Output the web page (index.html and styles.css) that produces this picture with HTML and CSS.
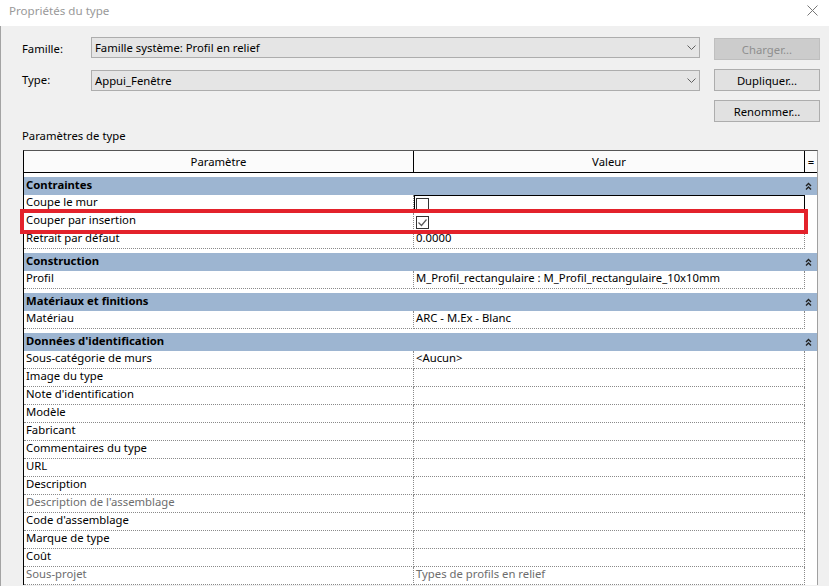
FILE: index.html
```html
<!DOCTYPE html>
<html lang="fr">
<head>
    <meta charset="UTF-8">
    <title>Propriétés du type</title>
    <link rel="stylesheet" href="styles.css">
</head>
<body>
    <div class="titlebar">
        <span class="title">Propriétés du type</span>
        <svg class="close" width="11" height="11" viewBox="0 0 11 11"><path d="M0.5 0.5 L10.5 10.5 M10.5 0.5 L0.5 10.5" stroke="#777" stroke-width="1" fill="none"/></svg>
    </div>

    <div class="content">
        <div class="top">
            <label class="lbl">Famille:</label>
            <div class="combo">
                <span>Famille système: Profil en relief</span>
                <svg width="9" height="5" viewBox="0 0 9 5"><path d="M0.5 0.5 L4.5 4.5 L8.5 0.5" stroke="#606060" fill="none"/></svg>
            </div>
            <button class="btn" disabled>Charger...</button>

            <label class="lbl">Type:</label>
            <div class="combo combo-low">
                <span>Appui_Fenêtre</span>
                <svg width="9" height="5" viewBox="0 0 9 5"><path d="M0.5 0.5 L4.5 4.5 L8.5 0.5" stroke="#606060" fill="none"/></svg>
            </div>
            <button class="btn">Dupliquer...</button>

            <span></span>
            <span></span>
            <button class="btn">Renommer...</button>
        </div>

        <div class="section-label">Paramètres de type</div>

        <div class="grid">
            <div class="head">
                <div class="h-name">Paramètre</div>
                <div class="h-val">Valeur</div>
                <div class="h-eq">=</div>
            </div>

            <div class="cat"><span>Contraintes</span><svg width="7" height="8" viewBox="0 0 7 8"><path d="M1 4 L3.5 1.5 L6 4 M1 7.5 L3.5 5 L6 7.5" stroke="#222" stroke-width="1.4" fill="none"/></svg></div>
            <div class="row"><div class="name">Coupe le mur</div><div class="val active"><span class="check"></span></div><div class="eq"></div></div>
            <div class="row"><div class="name">Couper par insertion</div><div class="val"><span class="check"><svg width="11" height="11" viewBox="0 0 11 11"><path d="M1.5 5.5 L4.5 8.5 L9.5 2.5" stroke="#5a5a5a" stroke-width="1.2" fill="none"/></svg></span></div><div class="eq"></div></div>
            <div class="row"><div class="name">Retrait par défaut</div><div class="val">0.0000</div><div class="eq"></div></div>

            <div class="cat"><span>Construction</span><svg width="7" height="8" viewBox="0 0 7 8"><path d="M1 4 L3.5 1.5 L6 4 M1 7.5 L3.5 5 L6 7.5" stroke="#222" stroke-width="1.4" fill="none"/></svg></div>
            <div class="row"><div class="name">Profil</div><div class="val">M_Profil_rectangulaire : M_Profil_rectangulaire_10x10mm</div><div class="eq"></div></div>

            <div class="cat"><span>Matériaux et finitions</span><svg width="7" height="8" viewBox="0 0 7 8"><path d="M1 4 L3.5 1.5 L6 4 M1 7.5 L3.5 5 L6 7.5" stroke="#222" stroke-width="1.4" fill="none"/></svg></div>
            <div class="row"><div class="name">Matériau</div><div class="val">ARC - M.Ex - Blanc</div><div class="eq"></div></div>

            <div class="cat"><span>Données d'identification</span><svg width="7" height="8" viewBox="0 0 7 8"><path d="M1 4 L3.5 1.5 L6 4 M1 7.5 L3.5 5 L6 7.5" stroke="#222" stroke-width="1.4" fill="none"/></svg></div>
            <div class="row"><div class="name">Sous-catégorie de murs</div><div class="val">&lt;Aucun&gt;</div><div class="eq"></div></div>
            <div class="row"><div class="name">Image du type</div><div class="val"></div><div class="eq"></div></div>
            <div class="row"><div class="name">Note d'identification</div><div class="val"></div><div class="eq"></div></div>
            <div class="row"><div class="name">Modèle</div><div class="val"></div><div class="eq"></div></div>
            <div class="row"><div class="name">Fabricant</div><div class="val"></div><div class="eq"></div></div>
            <div class="row"><div class="name">Commentaires du type</div><div class="val"></div><div class="eq"></div></div>
            <div class="row"><div class="name">URL</div><div class="val"></div><div class="eq"></div></div>
            <div class="row"><div class="name">Description</div><div class="val"></div><div class="eq"></div></div>
            <div class="row muted"><div class="name">Description de l'assemblage</div><div class="val"></div><div class="eq"></div></div>
            <div class="row"><div class="name">Code d'assemblage</div><div class="val"></div><div class="eq"></div></div>
            <div class="row"><div class="name">Marque de type</div><div class="val"></div><div class="eq"></div></div>
            <div class="row"><div class="name">Coût</div><div class="val"></div><div class="eq"></div></div>
            <div class="row muted"><div class="name">Sous-projet</div><div class="val">Types de profils en relief</div><div class="eq"></div></div>

            <div class="highlight"></div>
        </div>
    </div>
</body>
</html>
```

FILE: styles.css
```css
body { margin: 0; width: 829px; height: 586px; overflow: hidden; background: #f0f0f0;
       font-family: "Noto Sans", "DejaVu Sans", sans-serif; font-size: 11.3px; color: #000; }

.titlebar { height: 26px; box-sizing: border-box; background: #fff; display: flex; align-items: center;
            justify-content: space-between; padding: 0 11px 5px 9px; }
.title { color: #999; font-size: 11.6px; }

.content { border-left: 1px solid #a3a3a3; height: 560px; padding: 11px 0 0 21px; box-sizing: border-box; }

.top { display: grid; grid-template-columns: 55px 609px 106px; grid-auto-rows: 22px; column-gap: 14px; row-gap: 9px; }
.lbl { display: flex; align-items: center; }
.combo { height: 21px; box-sizing: border-box; border: 1px solid #adadad; background: #e5e5e5;
         display: flex; align-items: center; justify-content: space-between; padding: 0 2px 0 3px; }
.combo svg { margin-right: 1px; }
.combo-low { margin-top: 2px; }
.btn { height: 22px; margin-top: 1px; box-sizing: border-box; border: 1px solid #adadad; background: #e1e1e1;
       font: inherit; color: #000; padding: 0; }
.btn:disabled { background: #cccccc; border-color: #bfbfbf; color: #8f8f8f; }

.section-label { margin: 7px 0 6px; line-height: 16px; }

.grid { position: relative; margin-left: 1px; width: 795px; box-sizing: border-box; background: #fff;
        border-top: 1px solid #555; border-left: 1px solid #000; border-right: 1px solid #a0a0a0; }

.head { display: flex; height: 22px; box-sizing: border-box; border-bottom: 1px solid #000; background: #fbfbfb; }
.head div { display: flex; align-items: center; justify-content: center; padding-bottom: 1px; }
.h-name { width: 390px; box-sizing: border-box; border-right: 1px solid #000; }
.h-val { width: 391px; box-sizing: border-box; border-right: 1px solid #000; }
.h-eq { width: 12px; }

.cat { margin-top: 4px; height: 18px; box-sizing: border-box; background: #9db5d1; font-weight: bold; display: flex;
       align-items: center; justify-content: space-between; padding: 0 5px 3px 2px; }
.cat svg { margin-top: 2px; }

.row { display: flex; height: 18px; }
.name, .val { box-sizing: border-box; border-right: 1px dotted #8a8a8a; border-bottom: 1px dotted #8a8a8a;
              padding-left: 2px; line-height: 14px; white-space: nowrap; overflow: hidden; }
.name { width: 390px; }
.val { width: 391px; }
.eq { width: 12px; }
.val.active { outline: 1px solid #000; outline-offset: -1px; }
.muted .name, .muted .val { color: #6d6d6d; }

.check { display: inline-flex; align-items: center; justify-content: center; width: 13px; height: 13px; box-sizing: border-box;
         border: 1px solid #333; background: #fff; margin-top: 3px; vertical-align: top; }

.highlight { position: absolute; left: -4px; top: 58px; width: 788px; height: 25px; box-sizing: border-box;
             border: 4px solid #e3222b; }
```
